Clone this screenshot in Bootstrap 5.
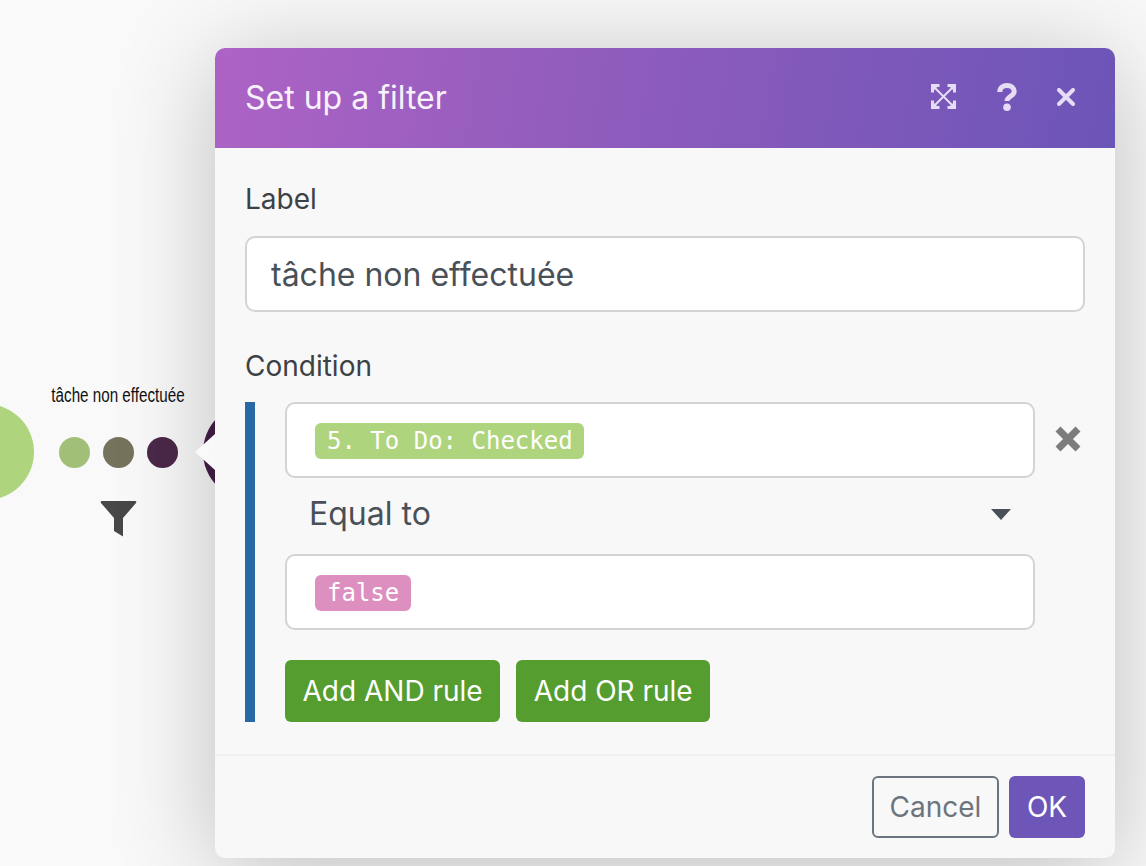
<!DOCTYPE html>
<html lang="en">
<head>
<meta charset="utf-8">
<title>Set up a filter</title>
<link href="https://cdn.jsdelivr.net/npm/bootstrap@5.3.0/dist/css/bootstrap.min.css" rel="stylesheet">
<style>
html,body{height:100%;margin:0}
body{background:#f9f9f9;font-family:Inter,"Noto Sans",sans-serif;overflow:hidden;position:relative;width:1146px;height:866px}
.canvas-item{position:absolute}
.node-big{left:-62px;top:404px;width:96px;height:96px;border-radius:50%;background:#afd47e}
.node-next{left:203px;top:404px;width:96px;height:96px;border-radius:50%;background:#451e48}
.dot{width:31px;height:31px;border-radius:50%;top:437px}
.route-label{left:18px;top:383px;width:200px;text-align:center;font-family:"Liberation Sans",sans-serif;font-size:20px;line-height:24px;color:#111;transform:scaleX(.76);white-space:nowrap}
.funnel{left:100px;top:501px}
.modal-pane{position:absolute;left:215px;top:48px;width:900px;height:810px;background:#f8f8f8;border-radius:10px;box-shadow:0 12px 100px rgba(0,0,0,.24);display:flex;flex-direction:column;color:#383d41}
.pointer{position:absolute;left:-20px;top:386px;width:0;height:0;border-top:18px solid transparent;border-bottom:18px solid transparent;border-right:20px solid #f9f9f9}
.pane-head{height:100px;flex:none;border-radius:10px 10px 0 0;background:linear-gradient(100deg,#ad63c5 0%,#8e5cbc 45%,#6c55b8 100%);padding:0 40px 0 30px;color:#fff}
.pane-title{font-size:32px;font-weight:400;margin:0;color:#f6f1fa}
.pane-tools{gap:0;margin-bottom:3px}
.pane-tool{display:block}
.pane-body{padding:34px 30px 0;flex:1}
.field-label{font-size:28px;font-weight:400;line-height:34px;display:block;margin:0 0 20px;color:#3c4146}
.text-box{height:76px;background:#fff;border:2px solid #d3d3d3;border-radius:10px;padding:2px 24px 0;font-size:32px;font-weight:400;color:#495057;display:flex;align-items:center}
.cond-label{margin-top:36px;margin-bottom:19px;padding-top:1px}
.cond-wrap{border-left:10px solid #2869a5;padding-left:30px;height:320px}
.cond-row{width:750px}
.pill-box{padding:2px 0 0 28px}
.pill{display:inline-block;font-family:"DejaVu Sans Mono",monospace;font-size:24px;line-height:36px;height:36px;padding:0 11.5px 0 12px;border-radius:6px;color:#fff}
.pill-green{background:#afd47e}
.pill-pink{background:#dd8fbf}
.remove-x{position:absolute;left:840px;top:278px}
.select-row{height:76px;padding:0 24px 4px;font-size:32px;font-weight:400;color:#495057}
.caret-down{width:0;height:0;border-left:10px solid transparent;border-right:10px solid transparent;border-top:11px solid #495057}
.btn-rule{background:#559d2e;border:0;color:#fff;font-size:28px;font-weight:400;height:62px;border-radius:6px;padding:0 17.5px}
.btn-rule:hover{background:#559d2e;color:#fff}
.rule-btns{margin-top:30px;gap:16px}
.pane-foot{height:104px;flex:none;border-top:2px solid #f0f0f0;padding:20px 30px 0;gap:10px}
.btn-cancel{width:127px;height:62px;border:2px solid #6c757d;border-radius:6px;background:transparent;color:#6c757d;font-size:28px;font-weight:400;padding:0}
.btn-ok{width:76px;height:62px;border:0;border-radius:6px;background:#6e55b8;color:#fff;font-size:28px;font-weight:400;padding:0}
.btn-ok:hover{background:#6e55b8;color:#fff}
</style>
</head>
<body>
<div class="canvas-item node-big"></div>
<div class="canvas-item node-next"></div>
<div class="canvas-item dot" style="left:59px;background:#a2bf77"></div>
<div class="canvas-item dot" style="left:103px;background:#76735c"></div>
<div class="canvas-item dot" style="left:147px;background:#4b2849"></div>
<div class="canvas-item route-label">tâche non effectuée</div>
<svg class="canvas-item funnel" width="37" height="36" viewBox="0 0 37 36"><path d="M2 0H35Q37 0 36 2L23 17V35.500L14 30V17L1 2Q0 0 2 0Z" fill="#484848"/></svg>

<div class="modal-pane">
  <div class="pointer"></div>
  <div class="pane-head d-flex align-items-center justify-content-between">
    <h1 class="pane-title">Set up a filter</h1>
    <div class="pane-tools d-flex align-items-center">
      <svg class="pane-tool" style="margin-right:41px" width="25" height="25" viewBox="0 0 25 25" fill="none" stroke="#e6dcf3"><path d="M1.500 8.500V1.500H8.500M16.500 1.500H23.500V8.500M23.500 16.500V23.500H16.500M8.500 23.500H1.500V16.500" stroke-width="3"/><path d="M3 3L22 22M22 3L3 22" stroke-width="2"/><path d="M2 2H7L2 7ZM23 2H18L23 7ZM23 23H18L23 18ZM2 23H7L2 18Z" fill="#e6dcf3" stroke="none"/></svg>
      <svg class="pane-tool" style="margin-right:40px" width="20" height="28" viewBox="0 0 20 28" fill="none"><path d="M2.800 9C2.800 4.800 6 2.500 10 2.500C14.200 2.500 17.200 5 17.200 8.500C17.200 13 10 13.500 10 18" stroke="#e6dcf3" stroke-width="5"/><circle cx="10" cy="24.200" r="3.800" fill="#e6dcf3"/></svg>
      <svg class="pane-tool" width="18" height="18" viewBox="0 0 18 18"><path d="M2 2L16 16M16 2L2 16" stroke="#e6dcf3" stroke-width="4" stroke-linecap="round"/></svg>
    </div>
  </div>
  <div class="pane-body position-relative">
    <label class="field-label">Label</label>
    <div class="text-box">tâche non effectuée</div>
    <label class="field-label cond-label">Condition</label>
    <div class="cond-wrap">
      <div class="cond-row text-box pill-box"><span class="pill pill-green">5. To Do: Checked</span></div>
      <div class="cond-row select-row d-flex align-items-center justify-content-between"><span>Equal to</span><span class="caret-down"></span></div>
      <div class="cond-row text-box pill-box"><span class="pill pill-pink">false</span></div>
      <div class="rule-btns d-flex">
        <button type="button" class="btn btn-rule">Add AND rule</button>
        <button type="button" class="btn btn-rule">Add OR rule</button>
      </div>
    </div>
    <svg class="remove-x" width="26" height="26" viewBox="0 0 26 26"><path d="M3 3L23 23M23 3L3 23" stroke="#7c7c7c" stroke-width="7"/></svg>
  </div>
  <div class="pane-foot d-flex justify-content-end align-items-start">
    <button type="button" class="btn btn-cancel">Cancel</button>
    <button type="button" class="btn btn-ok">OK</button>
  </div>
</div>
</body>
</html>
